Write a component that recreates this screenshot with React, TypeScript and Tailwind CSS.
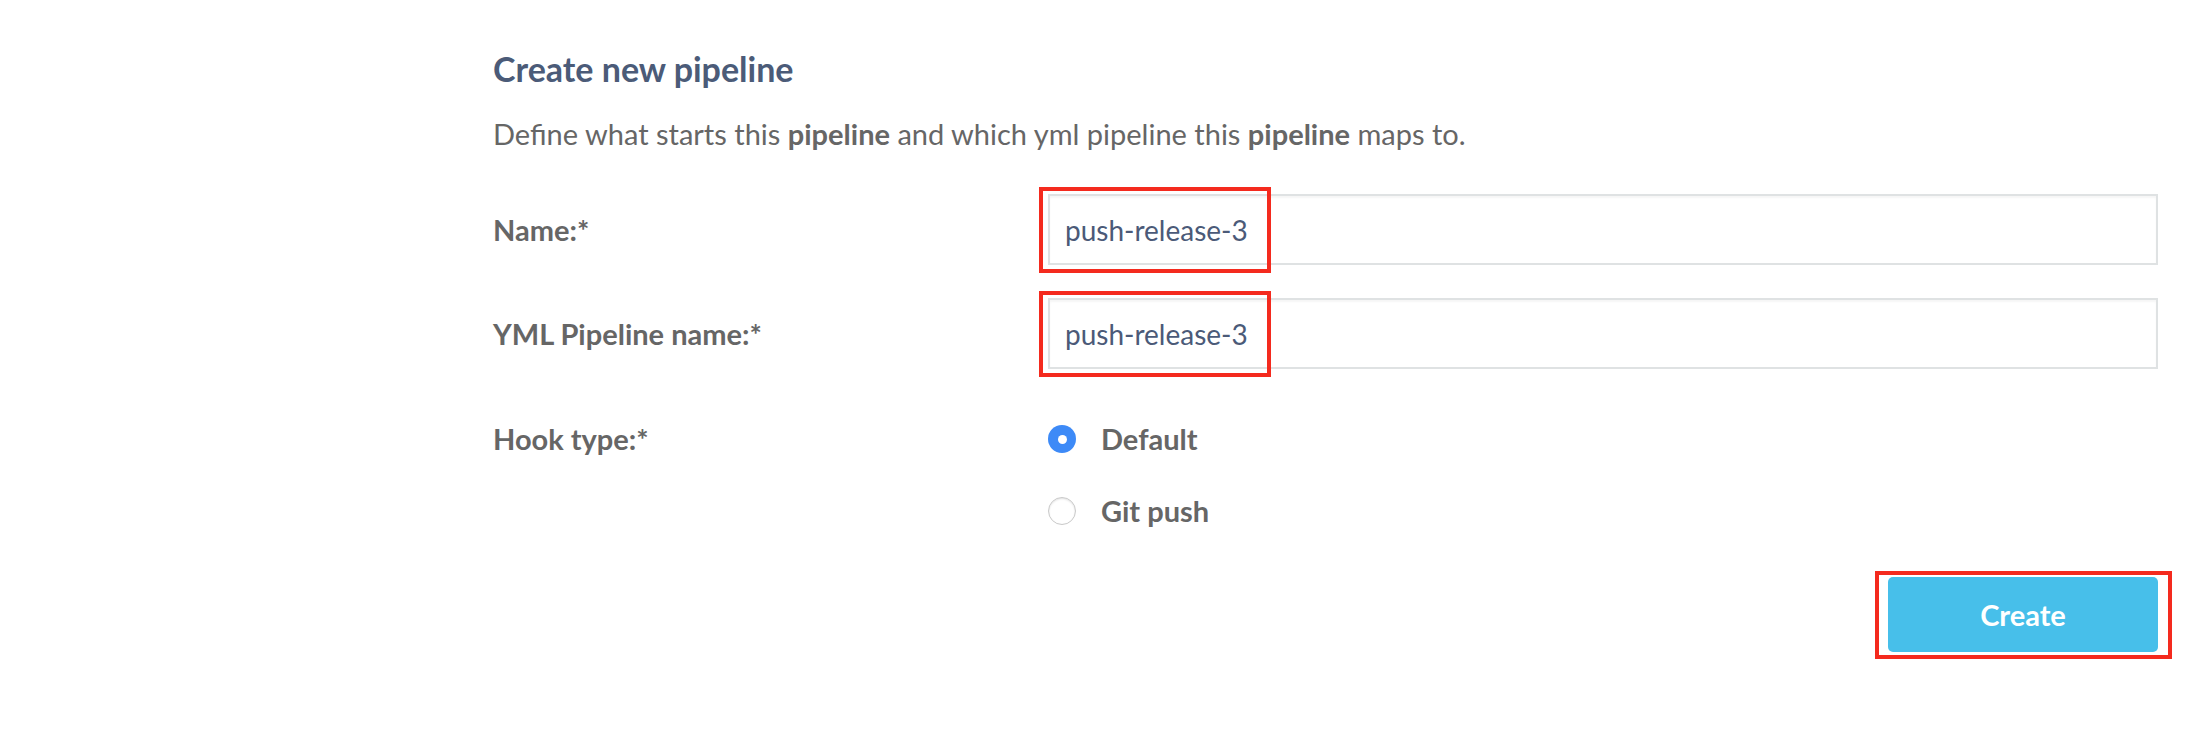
import React, { useState } from 'react';

const RedMark: React.FC<{ className: string }> = ({ className }) => (
  <div className={`pointer-events-none absolute border-[4px] border-[#f42a1e] ${className}`} />
);

const TextField: React.FC<{ value: string; onChange: (v: string) => void }> = ({ value, onChange }) => (
  <div className="relative">
    <input
      value={value}
      onChange={e => onChange(e.target.value)}
      className="h-[71px] w-full border-2 border-[#dfe2e3] bg-white px-[15px] text-[28px] text-[#4b5a78] shadow-[inset_0_2px_2px_rgba(0,0,0,0.04)] outline-none"
    />
    <RedMark className="-left-[9px] -top-[7px] h-[86px] w-[232px]" />
  </div>
);

export default function App() {
  const [name, setName] = useState('push-release-3');
  const [yml, setYml] = useState('push-release-3');
  const [hook, setHook] = useState('default');

  const hookOptions = [
    { value: 'default', label: 'Default' },
    { value: 'git-push', label: 'Git push' },
  ];

  return (
    <div className="min-h-screen bg-white pl-[493px] pr-[30px] pt-[49px] font-['Lato','Noto_Sans',sans-serif]">
      <h1 className="text-[34px] font-bold leading-[40px] text-[#4b5b78]">Create new pipeline</h1>
      <p className="mt-[27px] text-[29px] leading-[36px] text-[#666]">
        Define what starts this <b>pipeline</b> and which yml pipeline this <b>pipeline</b> maps to.
      </p>

      <div className="mt-[42px] grid grid-cols-[555px_1fr] gap-y-[33px]">
        <label className="self-center text-[29px] font-bold text-[#666]">Name:*</label>
        <TextField value={name} onChange={setName} />

        <label className="self-center text-[29px] font-bold text-[#666]">YML Pipeline name:*</label>
        <TextField value={yml} onChange={setYml} />

        <label className="mt-[17px] flex h-[40px] items-center text-[29px] font-bold text-[#666]">Hook type:*</label>
        <div className="mt-[17px] flex flex-col gap-[32px]">
          {hookOptions.map(opt => (
            <label key={opt.value} className="flex h-[40px] cursor-pointer items-center gap-[25px]" onClick={() => setHook(opt.value)}>
              {hook === opt.value ? (
                <span className="flex h-[28px] w-[28px] items-center justify-center rounded-full bg-[#3d8af7]">
                  <span className="h-[9px] w-[9px] rounded-full bg-white" />
                </span>
              ) : (
                <span className="h-[28px] w-[28px] rounded-full border border-[#c9c9c9] bg-white shadow-[inset_0_1px_2px_rgba(0,0,0,0.12)]" />
              )}
              <span className="text-[29px] font-bold text-[#666]">{opt.label}</span>
            </label>
          ))}
        </div>
      </div>

      <div className="mt-[46px] flex justify-end">
        <div className="relative">
          <button className="h-[75px] w-[270px] rounded-[5px] bg-[#47bfea] text-[29px] font-bold text-white">Create</button>
          <RedMark className="-left-[13px] -top-[6px] h-[88px] w-[297px]" />
        </div>
      </div>
    </div>
  );
}
